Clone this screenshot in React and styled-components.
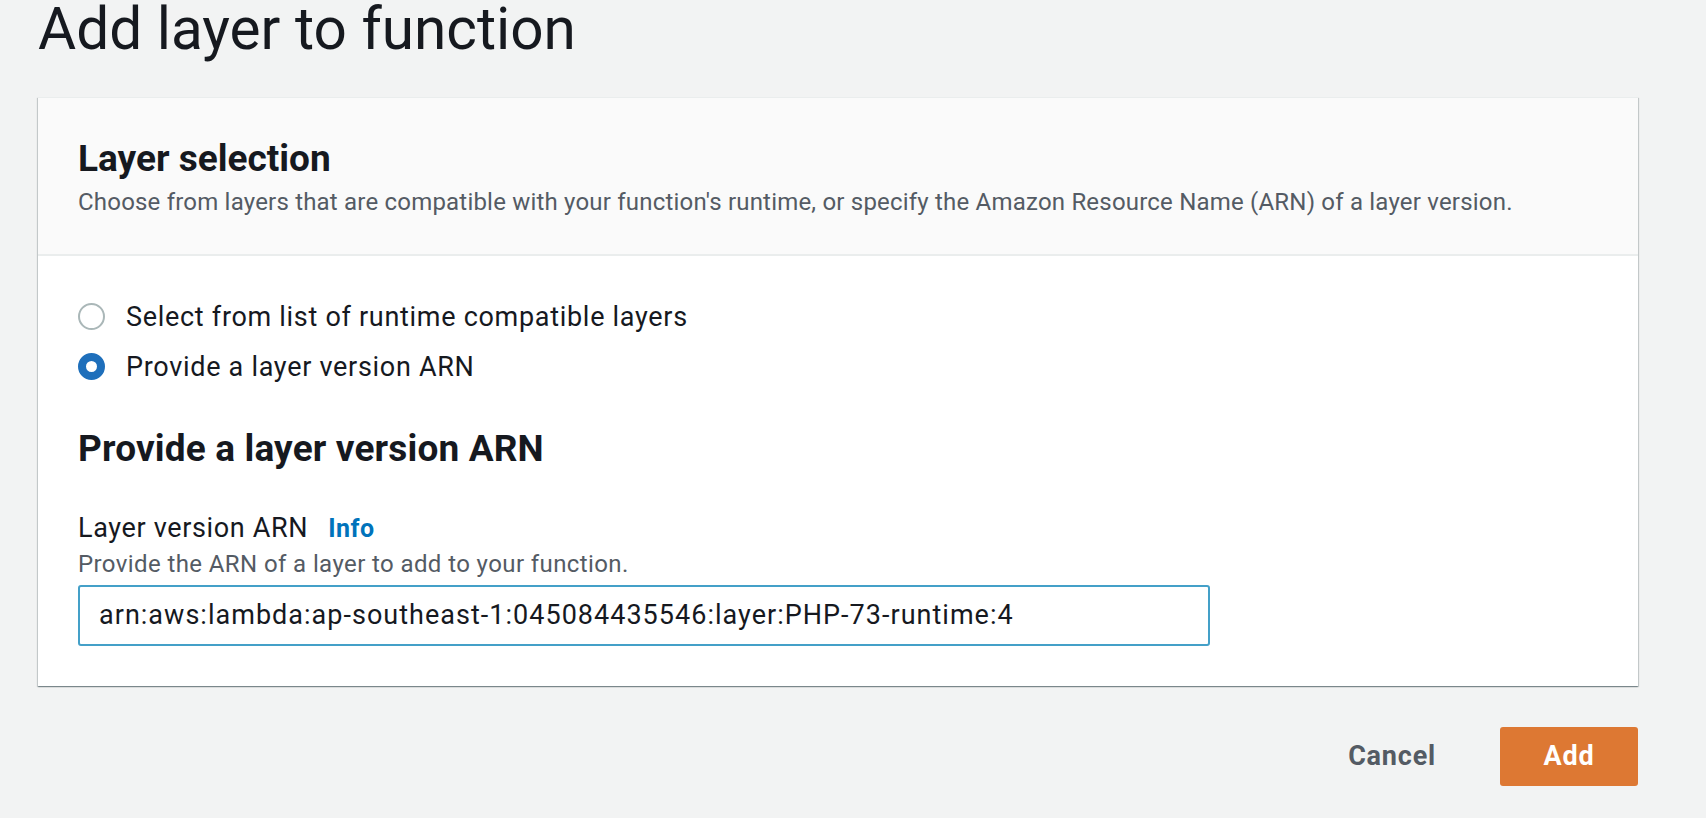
import React, { useState } from 'react';
import styled, { createGlobalStyle } from 'styled-components';

const GlobalStyle = createGlobalStyle`
  html, body {
    margin: 0;
    padding: 0;
    background: #f2f3f3;
  }
  body {
    font-family: Roboto, "Noto Sans", "Liberation Sans", sans-serif;
    color: #16191f;
  }
`;

const Page = styled.div`
  padding: 0 68px 0 38px;
`;

const Title = styled.h1`
  margin: 0;
  font-size: 58.5px;
  line-height: 58px;
  font-weight: 400;
  color: #16191f;
`;

const Card = styled.section`
  margin-top: 39px;
  background: #fff;
  border-top: 1px solid #eaeded;
  box-shadow: 0 1px 1px 0 rgba(0, 28, 36, 0.3), 1px 1px 1px 0 rgba(0, 28, 36, 0.15),
    -1px 1px 1px 0 rgba(0, 28, 36, 0.15);
`;

const CardHeader = styled.div`
  background: #fafafa;
  padding: 39px 40px 36px;
  border-bottom: 2px solid #eaeded;
`;

const Heading = styled.h2`
  margin: ${(p) => p.$top || 0}px 0 0;
  font-size: 37px;
  line-height: 43px;
  letter-spacing: ${(p) => p.$spacing || 0}px;
  font-weight: 700;
  color: #16191f;
`;

const Description = styled.p`
  margin: ${(p) => p.$top || 0}px 0 0;
  font-size: 24px;
  line-height: 30.8px;
  letter-spacing: ${(p) => p.$spacing || 0.2}px;
  color: #545b64;
`;

const CardBody = styled.div`
  padding: 46px 40px 40px;
`;

const RadioGroup = styled.div`
  display: flex;
  flex-direction: column;
  gap: 20px;
`;

const RadioRow = styled.label`
  display: flex;
  align-items: center;
  gap: 21px;
  height: 30px;
  font-size: 27px;
  letter-spacing: 0.7px;
  color: #16191f;
  cursor: pointer;
`;

const RadioDot = styled.span`
  box-sizing: border-box;
  width: 27px;
  height: 27px;
  border-radius: 50%;
  flex: none;
  background: #fff;
  border: ${(p) => (p.$checked ? '8px solid #1e6fbb' : '2px solid #aab7b8')};
`;

const FieldLabel = styled.div`
  margin-top: 41px;
  display: flex;
  align-items: baseline;
  gap: 20px;
  font-size: 27px;
  line-height: 35px;
  letter-spacing: 0.65px;
  color: #16191f;
`;

const InfoLink = styled.a`
  color: #0073bb;
  font-weight: 700;
  font-size: 25px;
  letter-spacing: 0.5px;
  text-decoration: none;
`;

const Hint = styled(Description)`
  margin-top: 3px;
`;

const TextInput = styled.input`
  box-sizing: border-box;
  display: block;
  margin-top: 5px;
  width: 1132px;
  height: 61px;
  padding: 0 19px;
  border: 2px solid #44a0c8;
  border-radius: 3px;
  font-family: inherit;
  font-size: 27px;
  letter-spacing: 1.02px;
  color: #16191f;
  background: #fff;
  outline: none;
`;

const Footer = styled.div`
  margin-top: 41px;
  display: flex;
  justify-content: flex-end;
  align-items: center;
  gap: 40px;
`;

const Button = styled.button`
  box-sizing: border-box;
  height: 59px;
  padding: 0 ${(p) => (p.$primary ? 40 : 24)}px;
  min-width: ${(p) => (p.$primary ? 138 : 0)}px;
  border: none;
  border-radius: 3px;
  font-family: inherit;
  font-size: 27px;
  letter-spacing: 0.8px;
  font-weight: 700;
  color: ${(p) => (p.$primary ? '#fff' : '#545b64')};
  background: ${(p) => (p.$primary ? '#dd7833' : 'transparent')};
  cursor: pointer;
`;

export default function App() {
  const [mode, setMode] = useState('arn');
  const [arn, setArn] = useState('arn:aws:lambda:ap-southeast-1:045084435546:layer:PHP-73-runtime:4');

  return (
    <Page>
      <GlobalStyle />
      <Title>Add layer to function</Title>
      <Card>
        <CardHeader>
          <Heading>Layer selection</Heading>
          <Description $top={7}>
            Choose from layers that are compatible with your function's runtime, or specify the Amazon Resource Name (ARN) of a layer version.
          </Description>
        </CardHeader>
        <CardBody>
          <RadioGroup>
            <RadioRow onClick={() => setMode('list')}>
              <RadioDot $checked={mode === 'list'} />
              Select from list of runtime compatible layers
            </RadioRow>
            <RadioRow onClick={() => setMode('arn')}>
              <RadioDot $checked={mode === 'arn'} />
              Provide a layer version ARN
            </RadioRow>
          </RadioGroup>
          <Heading $top={45} $spacing={0.15}>Provide a layer version ARN</Heading>
          <FieldLabel>
            Layer version ARN
            <InfoLink href="#">Info</InfoLink>
          </FieldLabel>
          <Hint $spacing={0.4}>Provide the ARN of a layer to add to your function.</Hint>
          <TextInput value={arn} onChange={(e) => setArn(e.target.value)} />
        </CardBody>
      </Card>
      <Footer>
        <Button>Cancel</Button>
        <Button $primary>Add</Button>
      </Footer>
    </Page>
  );
}
